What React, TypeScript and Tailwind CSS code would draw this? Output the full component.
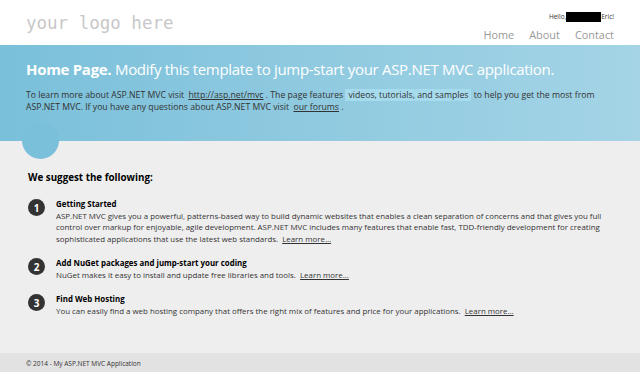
import React from "react";

const sans = { fontFamily: '"Open Sans", "Noto Sans", sans-serif' };

function Num({ n }: { n: number }) {
  return (
    <div className="w-[17px] h-[17px] rounded-full bg-[#333333] text-white flex items-center justify-center text-[10px] font-bold shrink-0 leading-none">
      {n}
    </div>
  );
}

export default function App() {
  return (
    <div className="w-[640px] h-[372px] overflow-hidden bg-[#efeeef] text-[#333333]" style={sans}>
      {/* header */}
      <header className="h-[45px] bg-white flex justify-between px-[26px]">
        <div
          className="pt-[15px] text-[17.5px] text-[#c8c8c8] leading-none"
          style={{ fontFamily: '"DejaVu Sans Mono", "Liberation Mono", monospace' }}
        >
          your logo here
        </div>
        <div className="flex flex-col items-end">
          <div className="mt-[12px] flex items-center text-[6.5px] text-[#333] leading-none h-[10px]">
            <span>Hello,</span>
            <span className="inline-block w-[35px] h-[10px] bg-black" />
            <span>Eric!</span>
          </div>
          <nav className="mt-[8px] flex gap-[15px] text-[10.9px] text-[#999999] leading-none">
            <span>Home</span>
            <span>About</span>
            <span>Contact</span>
          </nav>
        </div>
      </header>

      {/* featured */}
      <section className="relative h-[96px] bg-gradient-to-r from-[#7ac0da] to-[#a4d4e6] px-[26px] pt-[14px]">
        <h1 className="text-[15px] tracking-[-0.3px] text-white leading-[20px] whitespace-nowrap">
          <span className="font-bold">Home Page.</span> Modify this template to jump-start your ASP.NET MVC application.
        </h1>
        <p className="mt-[10px] text-[8.7px] leading-[12px] text-[#333333]">
          To learn more about ASP.NET MVC visit <span className="underline ml-[2px]">http://asp.net/mvc</span> . The page
          features <mark className="bg-[#a6dbed] text-[#333] px-[3px]">videos, tutorials, and samples</mark> to help
          you get the most from ASP.NET MVC. If you have any questions about ASP.NET MVC visit{" "}
          <span className="underline ml-[2px]">our forums</span> .
        </p>
        <div className="absolute left-[22px] top-[77px] w-[37px] h-[37px] rounded-full bg-[#7ac0da]" />
      </section>

      {/* main */}
      <main className="h-[212px] px-[28px] pt-[30px]">
        <h3 className="text-[9.8px] font-bold text-black leading-[14px]">We suggest the following:</h3>
        <ol className="mt-[14px] flex flex-col gap-[13px]">
          <li className="flex gap-[11px]">
            <Num n={1} />
            <div className="text-[7.9px] leading-[11.5px]">
              <div className="font-bold text-black">Getting Started</div>
              <div>
                ASP.NET MVC gives you a powerful, patterns-based way to build dynamic websites that enables a clean
                separation of concerns and that gives you full control over markup for enjoyable, agile development.
                ASP.NET MVC includes many features that enable fast, TDD-friendly development for creating
                sophisticated applications that use the latest web standards.{" "}
                <span className="underline ml-[2px]">Learn more…</span>
              </div>
            </div>
          </li>
          <li className="flex gap-[11px]">
            <Num n={2} />
            <div className="text-[7.9px] leading-[11.5px]">
              <div className="font-bold text-black">Add NuGet packages and jump-start your coding</div>
              <div>
                NuGet makes it easy to install and update free libraries and tools.{" "}
                <span className="underline ml-[2px]">Learn more…</span>
              </div>
            </div>
          </li>
          <li className="flex gap-[11px]">
            <Num n={3} />
            <div className="text-[7.9px] leading-[11.5px]">
              <div className="font-bold text-black">Find Web Hosting</div>
              <div>
                You can easily find a web hosting company that offers the right mix of features and price for your
                applications. <span className="underline ml-[2px]">Learn more…</span>
              </div>
            </div>
          </li>
        </ol>
      </main>

      {/* footer */}
      <footer className="h-[19px] bg-[#e2e2e2] px-[26px] pt-[8px] text-[6.5px] leading-none text-[#333]">
        © 2014 - My ASP.NET MVC Application
      </footer>
    </div>
  );
}
